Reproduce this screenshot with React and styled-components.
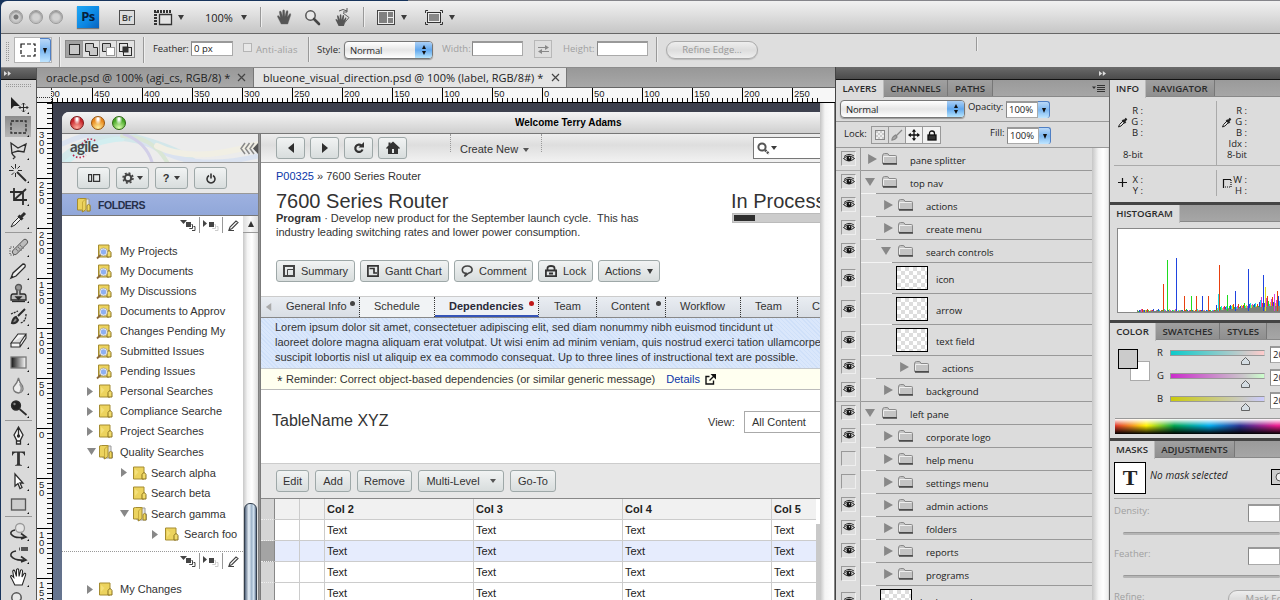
import React from "react";
import styled, { createGlobalStyle, css } from "styled-components";

const UI = `"Open Sans", "Noto Sans", sans-serif`;
const ARIAL = `"Liberation Sans", Arial, sans-serif`;

const GlobalStyle = createGlobalStyle`
  *, *::before, *::after { box-sizing: border-box; }
  body { margin: 0; width: 1280px; height: 600px; overflow: hidden; background: #dcdcdc; font-family: ${UI}; font-size: 9.5px; color: #1c1c1c; }
  svg { display: block; flex: none; overflow: visible; }
`;

/* ---------- shell ---------- */
const Shell = styled.div`
  width: 1280px; height: 600px; overflow: hidden; display: flex; flex-direction: column;
  background: linear-gradient(90deg, #17345c 0 408px, #85858a 408px);
  padding: 1px 0 0 1px;
`;
const Row = styled.div`display: flex; align-items: ${p => p.$align || "stretch"};`;
const AppBar = styled.header`
  height: 33px; flex: none; display: flex; align-items: center;
  background: linear-gradient(#f1f1f1, #dedede 45%, #c6c6c6);
  border-bottom: 1px solid #666; border-top-left-radius: 6px;
`;
const OptionsBar = styled.div`
  height: 34px; flex: none; display: flex; align-items: flex-start; padding-top: 3px;
  background: #dedede; border-bottom: 1px solid #8c8c8c; color: #2a2a2a;
`;
const Item = styled.div`
  flex: none; display: flex; align-items: center; margin-left: ${p => p.$gap || 0}px; width: ${p => p.$w}px;
  margin-top: ${p => p.$top || 0}px; white-space: nowrap; letter-spacing: ${p => p.$ls || 0}px;
  ${p => p.$dim && css`color: #a0a0a0;`}
`;
const Light = styled.i`
  width: 14px; height: 14px; border-radius: 50%; flex: none; margin-left: ${p => p.$gap}px;
  border: 1px solid #999; background: radial-gradient(circle at 50% 50%, ${p => p.$dot ? "#777 0 2px," : ""} #d2d2d2 3px, #c2c2c2 60%, #e6e6e6);
  box-shadow: inset 0 1px 2px #888;
`;
const PsLogo = styled.div`
  width: 22px; height: 22px; margin-left: 14px; background: linear-gradient(135deg, #1fa8f5, #0c86e2 60%, #0a62bc);
  color: #06203d; font: 700 13px/21px ${UI}; text-align: center; letter-spacing: -0.5px; box-shadow: 0 1px 1px #777;
`;
const BrLogo = styled.div`
  width: 16px; height: 15px; margin-left: 20px; border: 1px solid #4a4a4a; color: #3a3a3a; background: #ddd;
  font: 600 9.5px/13px ${UI}; text-align: center;
`;
const VLine = styled.i`
  flex: none; width: 1px; height: ${p => p.$h || 20}px; margin-left: ${p => p.$gap || 0}px; margin-top: ${p => p.$top || 0}px;
  background: #999; box-shadow: 1px 0 0 #eee;
`;
const Caret = styled.i`
  flex: none; display: inline-block; width: 0; height: 0; margin-left: ${p => p.$gap || 0}px;
  border: ${p => p.$s || 3.5}px solid transparent; border-bottom: 0;
  border-top: ${p => p.$hh || 5}px solid ${p => p.$c || "#3c3c3c"};
`;
const ZoomText = styled.span`font: 11px ${UI};`;

/* ---------- options bar ---------- */
const Grip = styled.i`
  flex: none; width: ${p => p.$w}px; height: ${p => p.$h}px; margin: ${p => p.$m};
  background: conic-gradient(#999 25%, transparent 0) 0 0 / 2px 2px;
`;
const Preset = styled.div`
  width: 38px; height: 26px; flex: none; margin-left: 5px; background: #fff; border: 1px solid #b3b3b3; display: flex;
  align-items: center; justify-content: space-between; padding-left: 5px;
`;
const BlueDrop = styled.span`
  width: ${p => p.$w || 11}px; align-self: stretch; display: flex; align-items: center; justify-content: center;
  background: linear-gradient(#b9d8f8, #7db7f0 50%, #bfe5ff); border: 1px solid #4f7fc4; border-width: 1px 1px 0 0; border-radius: 0 3px 3px 0;
`;
const ModeGroup = styled.div`display: flex; flex: none; margin: 3px 0 0 5px; border: 1px solid #888; height: 18px;`;
const ModeBtn = styled.span`
  width: 17px; display: flex; align-items: center; justify-content: center; border-right: 1px solid #999;
  background: ${p => p.$on ? "#a2a2a2" : "#e2e2e2"}; &:last-child { border-right: 0; }
`;
const Field = styled.div`
  flex: none; width: ${p => p.$w}px; height: ${p => p.$h || 15}px; margin-left: ${p => p.$gap || 0}px; margin-top: ${p => p.$top || 0}px;
  background: #fff; border: 1px solid #aaa; border-top: 2px solid #999; border-left-color: #888; line-height: ${p => (p.$h || 15) - 3}px; padding-left: 2px;
  white-space: nowrap; overflow: hidden; color: #1c1c1c;
`;
const Check = styled.i`width: 9px; height: 9px; flex: none; margin: 6px 0 0 10px; border: 1px solid #b5b5b5; background: #e8e8e8;`;
const Select = styled.div`
  flex: none; width: ${p => p.$w}px; height: 18px; margin-left: ${p => p.$gap || 0}px; margin-top: ${p => p.$top || 0}px;
  border: 1px solid #777; border-radius: 4px; background: linear-gradient(#fff, #e6e6e6 50%, #fff); display: flex; align-items: center;
  justify-content: space-between; padding-left: 5px; letter-spacing: -0.15px; box-shadow: 0 1px 1px #999; overflow: hidden;
`;
const Stepper = styled.span`
  width: 17px; height: 18px; display: flex; flex-direction: column; justify-content: center; align-items: center; gap: 2px;
  background: linear-gradient(#b4d4f6, #62a8ee 50%, #c0ecff);
  &::before, &::after { content: ""; border: 2.5px solid transparent; }
  &::before { border-top: 0; border-bottom: 4px solid #111; }
  &::after { border-bottom: 0; border-top: 4px solid #111; }
`;
const Swap = styled.div`width: 18px; height: 18px; margin: 3px 0 0 11px; border: 1px solid #b8b8b8; display: grid; place-items: center; flex: none;`;
const Pill = styled.div`
  width: ${p => p.$w}px; height: 18px; border-radius: 9px; border: 1px solid #aaa; color: #999; text-align: center; line-height: 15px;
  letter-spacing: 0; background: linear-gradient(#eee, #ddd 50%, #eee); flex: none; margin: ${p => p.$m || 0}; box-shadow: 0 1px 1px #bbb; white-space: nowrap;
`;

/* ---------- tools ---------- */
const Workspace = styled.div`flex: 1; min-height: 0; display: flex;`;
const Tools = styled.aside`width: 36px; flex: none; background: #dadada; border-right: 1px solid #555; overflow: hidden;`;
const DarkStrip = styled.div`
  height: ${p => p.$h || 12}px; flex: none; background: linear-gradient(#6a6a6a, #4b4b4b); border-bottom: 1px solid #111; display: flex; align-items: center;
  justify-content: ${p => p.$end ? "flex-end" : "flex-start"}; padding: ${p => p.$pad};
`;
const Tool = styled.div`
  height: 23px; width: 35px; display: grid; place-items: center; position: relative; padding-right: 1px;
  ${p => p.$on && css`background: linear-gradient(#8b8b8b, #b7b7b7) 4px 1px / 26px 21px no-repeat; `}
  &::after { content: ""; position: absolute; right: 7px; bottom: 1px; border: 1.5px solid #111; border-top-color: transparent; border-left-color: transparent; }
`;
const ToolRule = styled.div`height: ${p => p.$h}px; margin: 0 4px; border-bottom: 1px solid #999; transform: translateY(-2px);`;

/* ---------- document ---------- */
const Doc = styled.main`width: 798px; flex: none; display: flex; flex-direction: column; overflow: hidden;`;
const DocTabs = styled.div`height: 20px; flex: none; display: flex; background: linear-gradient(#989898, #a8a8a8); border-bottom: 1px solid #666;`;
const DocTab = styled.div`
  width: ${p => p.$w}px; padding-left: ${p => p.$pl}px; display: flex; align-items: center; justify-content: space-between; padding-right: ${p => p.$pr}px;
  background: ${p => p.$on ? "#e4e4e4" : "linear-gradient(#999, #a8a8a8)"}; border-right: 1px solid #777; font: 500 11px ${UI}; letter-spacing: ${p => p.$ls}px; white-space: nowrap; color: #222;
`;
const Rulers = styled.div`height: 15px; display: flex; flex: none; background: #f7f7f7; border-bottom: 1px solid #000;`;
const RulerCorner = styled.div`width: 15px; flex: none; background: linear-gradient(90deg, #333 50%, transparent 0) 0 9px / 2px 1px repeat-x #eee; border-right: 1px dotted #333;`;
const HStrip = styled.div`width: 768px; overflow: hidden; display: flex; & > :first-child { margin-left: -10px; }`;
const HCell = styled.div`
  width: 50px; height: 14px; flex: none; border-left: 1px solid #000; font: 9.5px/11px ${ARIAL}; padding-left: 1px; color: #222;
  background: repeating-linear-gradient(90deg, transparent 0 4px, #111 4px 5px) 0 100% / 49px 4px no-repeat;
`;
const VRuler = styled.div`width: 16px; flex: none; background: #f7f7f7; border-right: 1px solid #000; overflow: hidden; & > :first-child { margin-top: -25px; }`;
const VCell = styled.div`
  height: 50px; border-top: 1px solid #000; font: 9.5px/8px ${ARIAL}; padding: 2px 0 0 2px; color: #222; display: flex; flex-direction: column;
  background: repeating-linear-gradient(#0000 0 4px, #111 4px 5px) 100% 0 / 5px 49px no-repeat;
`;
const CanvasRow = styled.div`flex: 1; min-height: 0; display: flex;`;
const Canvas = styled.div`width: 767px; flex: none; padding: 9px 0 0 9px; background: linear-gradient(#3d404d, #454a5a 60px, #58637a 70%, #667590); display: flex; overflow: hidden;`;
const Gutter = styled.div`flex: 1; background: linear-gradient(90deg, #c4c4c4, #f4f4f4 35%, #fff); border-right: 1px solid #888;`;
const Win = styled.div`width: 758px; flex: none; background: #fff; border-top-left-radius: 7px; overflow: hidden; display: flex; flex-direction: column; font-family: ${ARIAL}; color: #333; font-size: 11px;`;
const WinTitle = styled.div`
  height: 22px; flex: none; background: linear-gradient(#f4f4f4, #cfcfcf); border-bottom: 1px solid #777; display: flex; align-items: center; padding-left: 8px;
  font: 700 10px ${ARIAL}; color: #000;
`;
const WinName = styled.span`margin: -1px 0 0 382px;`;
const Gem = styled.i`
  width: 14px; height: 14px; border-radius: 50%; margin-right: 7px; flex: none; border: 1px solid ${p => p.$d};
  background: radial-gradient(ellipse at 50% 18%, #fff 0 8%, transparent 40%), radial-gradient(circle at 50% 90%, ${p => p.$l}, ${p => p.$c} 65%);
`;
const WinBody = styled.div`flex: 1; min-height: 0; display: flex;`;
const Side = styled.div`width: 196px; flex: none; display: flex; flex-direction: column;`;
const Splitter = styled.div`width: 3px; flex: none; background: linear-gradient(90deg, #777, #999 60%, #666);`;
const Brand = styled.div`height: 29px; flex: none; background: #ececec; border-bottom: 1px solid #999; display: flex; justify-content: space-between; overflow: hidden; position: relative;`;
const Wave = styled.svg`position: absolute; left: 0; top: 0;`;
const BrandName = styled.span`position: relative; margin: 4px 0 0 8px; font: 700 15px/17px "Lato", sans-serif; letter-spacing: -0.6px; color: #484848;`;
const Collapse = styled.span`position: relative; margin-top: 8px; height: 13px;`;
const SideButtons = styled.div`height: 31px; flex: none; background: #e8e8e8; padding: 4px 0 0 15px; display: flex; gap: 6px; border-bottom: 1px solid #999;`;
const Btn = styled.div`
  height: 22px; width: ${p => p.$w}px; flex: none; border: 1px solid #9ea8a8; border-radius: 3px; background: linear-gradient(#f1f3f3, #d8dddd);
  display: flex; align-items: center; justify-content: ${p => p.$left ? "flex-start" : "center"}; gap: ${p => p.$gap || 5}px; padding-left: ${p => p.$left || 0}px; font: 11px ${ARIAL}; color: #333; white-space: nowrap;
`;
const FolderHead = styled.div`
  height: 22px; flex: none; background: linear-gradient(#9db1e0, #91a7d9); border-bottom: 1px solid #777; display: flex; align-items: center; padding-left: 14px; gap: 5px; font: 700 10.5px ${ARIAL}; color: #26304a; letter-spacing: -0.45px;
`;
const TreeWrap = styled.div`flex: 1; min-height: 0; display: flex;`;
const Tree = styled.div`width: 181px; flex: none; overflow: hidden;`;
const TreeTools = styled.div`
  height: ${p => p.$h}px; display: flex; justify-content: flex-end; align-items: flex-start; padding-top: 1px; border-top: ${p => p.$dots ? "1px dotted #999" : "0"};
`;
const TreeTool = styled.span`height: 16px; width: ${p => p.$w}px; display: grid; place-items: center; border-right: ${p => p.$last ? 0 : "1px solid #999"};`;
const TreeItem = styled.div`height: ${p => p.$h || 20}px; display: flex; align-items: center; padding-left: ${p => p.$pl}px; white-space: nowrap; font: 11px ${ARIAL}; color: #333;`;
const Tw = styled.span`width: ${p => p.$w || 12}px; flex: none; display: flex; align-items: center;`;
const TreeIcon = styled.span`width: ${p => p.$w || 21}px; flex: none;`;
const SideScroll = styled.div`
  flex: 1; background: linear-gradient(90deg, #c8c8c8, #f4f4f4 30%, #fff 60%, #ddd); display: flex; flex-direction: column; align-items: center;
`;
const UpBox = styled.div`width: 15px; height: 17px; flex: none; display: grid; place-items: center; border-bottom: 1px solid #999; background: linear-gradient(90deg, #ddd, #f8f8f8, #ddd);`;
const Thumb = styled.div`width: 13px; height: 120px; flex: none; margin-top: 270px; border-radius: 6px; border: 1px solid #34404e; background: linear-gradient(90deg, #56677e, #e9f2fa 35%, #9eb4ca 60%, #d5e5f3 80%, #5b6e88);`;
const Spacer = styled.div`height: ${p => p.$h}px;`;

const Main = styled.div`width: 559px; flex: none; display: flex; flex-direction: column; overflow: hidden;`;
const NavBar = styled.div`height: 29px; flex: none; display: flex; background: linear-gradient(#ededed, #dedede 40%, #f2f2f2); border-bottom: 1px solid #999; padding: 3px 0 0 15px;`;
const NavButtons = styled.div`display: flex; gap: 5px;`;
const CreateNew = styled.div`width: 92px; height: 18px; margin: -3px 0 0 43px; border: 1px dotted #999; border-width: 0 1px; display: flex; gap: 5px; padding: 9px 0 0 9px; white-space: nowrap; font-size: 11px; line-height: 13px; & i { margin-top: 5px; }`;
const SearchBox = styled.div`margin-left: 211px; flex: 1; height: 22px; border: 1px solid #777; border-right: 0; background: #fff; display: flex; align-items: center; padding-left: 3px;`;
const Header = styled.div`height: 133px; flex: none; display: flex; padding: 6px 0 0 15px; `;
const HeadText = styled.div`width: 455px; flex: none;`;
const Crumb = styled.div`font-size: 11px; line-height: 14px; & a { color: #0a36a8; }`;
const Title = styled.div`font-size: 20px; line-height: 24px; margin-top: ${p => p.$mt || 6}px; color: #333; white-space: nowrap;`;
const Desc = styled.div`font-size: 11px; line-height: 14px; white-space: pre; margin-top: -2px; letter-spacing: -0.015px;`;
const Actions = styled.div`display: flex; gap: 5px; margin-top: 21px;`;
const Progress = styled.div`width: 120px; height: 10px; border: 1px solid #bbb; background: #ccc; margin-left: 1px; padding: 1px; & > i { display: block; width: 21px; height: 6px; background: #2e2e2e; }`;
const TabRow = styled.div`height: 22px; flex: none; display: flex; background: linear-gradient(#e9edf2, #d9dee5); border-top: 1px solid #ccc; border-bottom: 1px solid #888; white-space: nowrap; font-size: 11px;`;
const Tab = styled.div`
  width: ${p => p.$w}px; flex: none; border-right: 1px dotted #333; padding-left: ${p => p.$pl}px; line-height: 19px; display: flex;
  ${p => p.$light && css`background: #f1f3f5;`}
  ${p => p.$on && css`font-weight: 700; background: #eef1f5; border-bottom: 2px solid #3554b8; color: #2a2a38;`}
`;
const Dot = styled.i`width: 5px; height: 5px; border-radius: 50%; background: ${p => p.$c}; margin: 4px 0 0 ${p => p.$gap || 4}px;`;
const Notice = styled.div`
  height: 51px; flex: none; padding: 2px 0 0 14px; font-size: 11px; line-height: 15px; white-space: pre;
  background: repeating-linear-gradient(45deg, #cfe0f9 0 1px, #dae7fb 1px 3px); border-bottom: 1px solid #c5c9cd;
`;
const Reminder = styled.div`height: 21px; flex: none; background: #fffff0; border-bottom: 1px solid #bbb; padding-left: 16px; display: flex; align-items: center; white-space: nowrap; & > i { font: 14px/10px ${ARIAL}; width: 9px; padding-top: 3px; } & a { color: #0a36a8; margin: 0 5px 0 11px; }`;
const TableHead = styled.div`height: 73px; flex: none; display: flex; padding-left: 11px; & > b { font-weight: 400; font-size: 16px; width: 436px; line-height: 62px; } & > span { width: 36px; line-height: 65px; }`;
const ViewSelect = styled.div`margin-top: 21px; height: 22px; flex: 1; border: 1px solid #aaa; border-right: 0; line-height: 20px; padding-left: 7px;`;
const TableBar = styled.div`height: 36px; flex: none; background: #e7e7e7; border-top: 1px solid #ccc; border-bottom: 1px solid #888; display: flex; gap: 6px; padding: 6px 0 0 15px;`;
const Grid = styled.div`display: flex; flex: 1; min-height: 0;`;
const GridRows = styled.div`width: 555px; flex: none;`;
const GridRow = styled.div`
  height: 21px; display: grid; grid-template-columns: 14px 25px 25px 149px 149px 149px 1fr; line-height: 20px; font-size: 11px; color: #222;
  background: ${p => p.$bg || "#fff"}; font-weight: ${p => p.$head ? 700 : 400};
  & > span { border-right: 1px solid #ccc; border-bottom: 1px solid #ccc; padding-left: 2px; }
  & > span:first-child { background: ${p => p.$sel ? "#a4a4a4" : "#d5d5d5"}; border-right: 1px solid #888; border-bottom: 1px dotted #eee; }
  & > span:last-child { border-right: 0; }
`;
const GridScroll = styled.div`width: 4px; background: #c9c9c9; margin-top: ${p => p.$t}px;`;

/* ---------- panels ---------- */
const Docks = styled.div`flex: 1; min-width: 0; display: flex; flex-direction: column; border-left: 1px solid #444; margin-top: -1px;`;
const DockRow = styled.div`display: flex; flex: 1; min-height: 0;`;
const Layers = styled.section`width: 274px; flex: none; background: #dcdcdc; border-right: 1px solid #666; display: flex; flex-direction: column; overflow: hidden;`;
const SideDock = styled.section`flex: 1; background: #dcdcdc; min-width: 0; overflow: hidden;`;
const PanelTabs = styled.div`height: 17px; flex: none; display: flex; background: linear-gradient(#9a9a9a, #a6a6a6); border-bottom: 1px solid #888;`;
const PanelTab = styled.div`
  width: ${p => p.$w}px; flex: none; text-align: center; font: 600 9.6px/17px ${UI}; border-right: 1px solid #777; color: #2a2a2a; white-space: nowrap;
  ${p => p.$on ? css`background: #dcdcdc; height: 18px; border-right-color: #bbb;` : css`background: linear-gradient(#a0a0a0, #8f8f8f);`}
`;
const PanelMenu = styled.div`margin-left: auto; padding: 5px 4px 0 0;`;
const Line = styled.div`display: flex; align-items: flex-start; height: ${p => p.$h}px; flex: none; padding: ${p => p.$p || 0}; border-bottom: 1px solid #999; white-space: nowrap;`;
const LockGroup = styled.div`display: flex; border: 1px solid #999; height: 18px; & > span { width: 17px; display: grid; place-items: center; border-right: 1px solid #999; } & > span:last-child { border: 0; } & > span:nth-child(n+3) { background: #f2f2f2; }`;
const LayerArea = styled.div`flex: 1; display: flex; min-height: 0;`;
const LayerList = styled.div`width: 256px; flex: none;`;
const LayerRow = styled.div`height: ${p => p.$h}px; display: flex; background: linear-gradient(#f4f4f4, #f4f4f4) 24px 100% / ${p => p.$line}px 1px no-repeat;`;
const EyeCell = styled.div`width: 25px; flex: none; border-right: 1px solid #999; padding: ${p => p.$tall ? 6 : 3}px 0 0 5px; ${p => p.$rule && css`border-bottom: 1px solid #aaa;`}`;
const EyeBox = styled.div`width: 15px; height: ${p => p.$tall ? 18 : 15}px; border: 1px solid #999; border-right-color: #eee; border-bottom-color: #eee; display: grid; place-items: center;`;
const LayerBody = styled.div`flex: 1; margin-left: ${p => p.$l}px; border-bottom: 1px solid #999; display: flex; align-items: center; letter-spacing: -0.02px; color: #1a1a1a; white-space: nowrap;`;
const LayerName = styled.span`padding-top: 2px;`;
const Disclosure = styled.span`width: 16px; flex: none; display: flex;`;
const FolderSlot = styled.span`width: 27px; flex: none;`;
const Thumbnail = styled.span`
  width: 32px; height: 24px; flex: none; border: 1px solid #000; margin-right: 8px;
  background: conic-gradient(#fff 25%, #ddd 0 50%, #fff 0 75%, #ddd 0) 0 0 / 8px 8px;
`;
const LayerScroll = styled.div`width: 16px; background: linear-gradient(90deg, #c6c6c6, #f3f3f3 40%, #fff 70%, #eee);`;
const BlueTall = styled.span`display: flex; height: 17px; margin-top: 1px;`;
const Indent = styled.span`flex: none; width: ${p => p.$w > 0 ? p.$w : 0}px; margin-left: ${p => p.$w < 0 ? p.$w : 0}px;`;

const PanelGap = styled.div`height: 3px; background: #444;`;
const Info = styled.div`height: 105px; padding-left: 4px; line-height: 11px;`;
const InfoRow = styled.div`display: flex; height: ${p => p.$h}px; padding-top: 4px; border-bottom: ${p => p.$b ? "1px solid #aaa" : 0};`;
const InfoCell = styled.div`width: 102px; flex: none; display: flex; padding-left: 4px; & + & { border-left: 1px solid #aaa; padding-left: 5px; }`;
const InfoIcon = styled.span`width: 6px; flex: none; padding-top: ${p => p.$pt || 11}px;`;
const InfoLabels = styled.span`width: 19px; white-space: pre; display: flex; flex-direction: column; align-items: flex-end; padding-top: 4px; line-height: 11px;`;
const HistWrap = styled.div`height: 98px; padding-top: 1px;`;
const HistBox = styled.div`margin: 5px 0 0 7px; height: 85px; background: #fff; border: 1px solid #888; border-right: 0;`;
const ColorBody = styled.div`height: 98px; display: flex; flex-direction: column; justify-content: space-between;`;
const Swatches = styled.div`width: 32px; height: 32px; margin: 9px 0 0 8px; flex: none; display: grid; & > i { grid-area: 1 / 1; width: 20px; height: 20px; } & > i:first-child { align-self: end; justify-self: end; background: #fff; border: 1px solid #aaa; } & > i:last-child { background: #cbcbcb; border: 1px solid #000; }`;
const Sliders = styled.div`margin-left: 7px; padding-top: 6px;`;
const SliderRow = styled.div`height: 23px; display: flex; & > b { font-weight: 400; width: 13px; line-height: 13px; }`;
const Track = styled.div`width: 95px; height: 6px; margin: 4px 5px 0 0; border: 1px solid #999; border-right-color: #ccc; background: linear-gradient(90deg, ${p => p.$a}, #cbcbcb 80%, ${p => p.$b});`;
const KnobRow = styled.div`padding-left: 71px; margin-top: 1px;`;
const Spectrum = styled.div`height: 16px; margin: 0 0 4px 5px; border-top: 1px solid #999;
  background: linear-gradient(#fff, transparent 45%, #0003 55%, #000), linear-gradient(90deg, #e0352a, #f3901f 10%, #fff200 19%, #00a550 36%, #00aeef 57%, #2e3192 76%, #ec1c8f 98%);`;
const MaskHead = styled.div`height: 41px; margin: 0 0 0 4px; padding-top: 4px; display: flex; border-bottom: 1px solid #aaa; font: italic 10px ${UI}; letter-spacing: 0.05px; white-space: nowrap;`;
const MaskT = styled.div`width: 32px; height: 32px; flex: none; border: 1px solid #000; background: #fff; font: 700 22px/29px "Liberation Serif", serif; text-align: center; letter-spacing: 0; color: #222;`;
const MaskNote = styled.span`width: 125px; flex: none; padding: 5px 0 0 4px; line-height: 16px;`;
const MaskBtn = styled.span`width: 20px; height: 16px; flex: none; margin-top: 7px; border: 1px solid #000; background: #ccc; padding: 2px 0 0 3px;`;
const MaskLine = styled.div`display: flex; height: 43px; padding: 5px 0 0 4px; color: #a0a0a0; line-height: 14px; position: relative; justify-content: space-between;
  &::after { content: ""; position: absolute; left: 13px; right: 0; bottom: 7px; height: 3px; background: #b5b5b5; border-top: 1px solid #999; border-radius: 2px; display: ${p => p.$bare ? "none" : "block"}; }`;

/* ---------- drawings ---------- */
const Svg = ({ w = 20, h = 20, vb, children, sw = 1.3, c = "#2c2c2c", fill = "none" }) => (
  <svg width={w} height={h} viewBox={vb || `0 0 ${w} ${h}`} stroke={c} fill={fill} strokeWidth={sw}>{children}</svg>
);
const HandPath = "M6 17 L3 11 Q1 8 3 8 L5 10 L4 4 Q5 2 6 4 L7.5 9 L7.6 2.5 Q9 1 9.6 2.5 L10 9 L11.5 3 Q13 2 13.3 4 L12.7 9.5 L15 6 Q16.5 5.5 16.2 7.5 L13 17 Z";
const Hand = ({ solid, s = 16 }) => <svg width={s} height={s} viewBox="1 1 16 17"><path d={HandPath} fill={solid ? "#555" : "#fff"} stroke={solid ? "#666" : "#222"} strokeWidth={solid ? .4 : 1} /></svg>;
const Magnifier = ({ s = 17 }) => <svg width={s} height={s} viewBox="0 0 17 17"><circle cx="6.500" cy="6.500" r="4.700" fill="#e8e8e8" stroke="#555" strokeWidth="1.500" /><path d="M10 10L15 15" stroke="#444" strokeWidth="2.600" strokeLinecap="round" /></svg>;
const RotateView = () => <svg width="20" height="19" viewBox="0 0 20 19"><g transform="translate(1 5) scale(.76)"><path d={HandPath} fill="#555" /></g><path d="M6 3 Q10 0 14 3 M14 0v4h-4" stroke="#555" fill="none" /><path d="M10 5l6 4.500-5 6" stroke="#666" fill="none" /></svg>;
const Rulr = () => <Svg w={18} h={15} c="#333"><path d="M1.500 15V1.500H18" strokeWidth="3" strokeDasharray="2 1" /><path d="M5.500 4.500H17.500V14.500H5.500Z" fill="#e4e4e4" /></Svg>;
const Arrange = () => <Svg w={18} h={15} c="#444"><rect x=".5" y=".5" width="17" height="14" fill="#eee" strokeWidth="1" /><path d="M2 2h8v11H2zM11 2h5v5h-5zM11 8h5v5h-5z" fill="#808080" stroke="none" /></Svg>;
const Screen = () => <Svg w={18} h={15} c="#333" sw={1}><path d="M.5 3V.500H3M15 .500h2.500V3M17.500 12v2.500H15M3 14.500H.500V12" /><rect x="2.500" y="2.500" width="13" height="10" fill="#eee" /><rect x="4" y="4" width="10" height="7" fill="#888" stroke="none" /></Svg>;
const DblArrow = () => <svg width="7" height="5" viewBox="0 0 7 5"><path d="M0 0L3.200 2.500 0 5zM3.800 0L7 2.500 3.800 5z" fill="#ddd" /></svg>;
const Tri = ({ dir, c = "#888", s = 9 }) => <svg width={s} height={s} viewBox="0 0 9 9"><path d={dir === "down" ? "M0 1h9L4.500 8z" : dir === "left" ? "M7 0v9L1 4.500z" : "M1 0l8 4.500L1 9z"} fill={c} /></svg>;
const NavArrow = ({ back }) => <svg width="6" height="10" viewBox="0 0 6 10"><path d={back ? "M6 0v10L0 5z" : "M0 0v10l6-5z"} fill="#2e2e2e" /></svg>;
const SmallTri = () => <svg width="6" height="9" viewBox="0 0 6 9"><path d="M0 0l6 4.500L0 9z" fill="#888" /></svg>;
const Cross = () => <Svg w={7} h={7} c="#444" sw={1.200}><path d="M0 0l7 7M7 0L0 7" /></Svg>;

const toolIcons = [
  <path key="a" d="M3 3v12l3-3h6z" fill="#222" stroke="none" />,
  <rect key="a" x="3" y="4" width="15" height="12" strokeDasharray="3 1.500" />,
  <path key="a" d="M4 14L3 3l7 5 8-4-2 8-6-1-4 1q-3 1-1 3l2 2-2 2" />,
  <g key="a"><path d="M9 9l9 9" strokeWidth="2" /><path d="M7.500 1v4.500M7.500 10v4M1 7.500h4.500M10 7.500h4M3 3l3 3M12 3L9.500 5.500M3.500 12l2.500-2.500" strokeWidth="1" /></g>,
  <path key="a" d="M6 2v12h13M2 6h13v13M6 14L18 3" strokeWidth="1.800" />,
  <g key="a"><path d="M3 18l2-4 7-7 2 2-7 7z" fill="#eee" strokeWidth="1" /><path d="M10.500 6.500l4 4M13 8l4-4" strokeWidth="3" /></g>,
  <g key="a"><path d="M6 18h-4v-8h5" strokeDasharray="1 1.500" strokeWidth="1" /><path d="M7 15L17 5" stroke="#555" strokeWidth="6" strokeLinecap="round" /><path d="M7 15L17 5" stroke="#bbb" strokeWidth="4.400" strokeLinecap="round" /><path d="M10 10l4 4M12 8l4 4M8 12l3 3" stroke="#666" strokeDasharray="1 1" /></g>,
  <path key="a" d="M3 18l2-5L15 4q3 0 2 3L8 16zM3 18l2-1-1-1z" fill="#eee" />,
  <g key="a"><circle cx="10.500" cy="4.500" r="3" fill="#999" stroke="#555" /><path d="M9 7.500v3.500H5q-2 0-2 3v3h15v-3q0-3-2-3h-4V7.500" fill="#bbb" /><path d="M4 18.500h13" /><path d="M8 14h5l-2.500 2.500z" fill="#222" /></g>,
  <g key="a"><path d="M10 10l7-7M4 17q4 1 6-3l-2-3q-3 1-4 6z" fill="#888" strokeWidth="2" /><path d="M3 8l7-3M18 8q0 8-6 9" strokeDasharray="2 1" /></g>,
  <path key="a" d="M3 14l7-9h8l-6 9zM3 14v4h9l6-9V5M12 14v4" fill="#f4f4f4" strokeWidth="1.100" />,
  <g key="a"><defs><linearGradient id="tg"><stop stopColor="#111" /><stop offset="1" stopColor="#fff" /></linearGradient></defs><rect x="3" y="5" width="15" height="11" fill="url(#tg)" stroke="#777" /></g>,
  <g key="a"><path d="M10.500 3q1 5 4 8 2 6-4 7-6-1-5-6 4-4 5-9z" fill="#eee" stroke="#777" /><path d="M12 9q3 5 0 8" stroke="#999" strokeWidth="2" /></g>,
  <g key="a"><circle cx="8" cy="7.500" r="4.500" fill="#222" /><path d="M11.500 11l7 6" strokeWidth="1.800" /><circle cx="6.500" cy="6" r="1.200" fill="#888" stroke="none" /></g>,
  <g key="a"><path d="M10.500 2L6 10l3 6h3l3-6zM10.500 3v8M8.500 16h4v3h-4z" fill="#f4f4f4" /><circle cx="10.500" cy="11" r="1" fill="#222" /></g>,
  <path key="a" d="M4 3.500h13V7.500h-.8q-.5-2.800-3-2.800h-1.300V15.500q0 1.500 2 1.500v.8h-6.800v-.8q2 0 2-1.500V4.700H7.800q-2.500 0-3 2.800H4z" fill="#333" stroke="none" />,
  <path key="a" d="M7 3v12l3-2.500 2 5 2-1-2-4.500h3z" fill="#fff" />,
  <rect key="a" x="3.500" y="5" width="14" height="11" fill="#ccc" stroke="#555" />,
  <g key="a"><path d="M7 9q-5 1-4 4 4 5 13 3M13 12.500l5 3.500-5 2" strokeWidth="1.600" /><circle cx="12" cy="7" r="4.500" fill="#e4e4e4" stroke="#999" /></g>,
  <g key="a"><path d="M8 7q-6 1-5 5 4 5 13 4M13 12.500l5 3.500-5 2" strokeWidth="1.600" /><path d="M13 3h7v4h-7zM11 3.500h1v3h-1z" fill="#555" stroke="none" /></g>,
];
const ToolIcon = ({ i }) => <Svg w={21} h={20} vb="0 0 21 20">{toolIcons[i]}{i === 0 && <path d="M15.500 9v9M11 13.500h9M14 10.500l1.500-1.500 1.500 1.500M14 16.500l1.500 1.500 1.500-1.500M12.500 12L11 13.500l1.500 1.500M18.500 12l1.500 1.500-1.500 1.500" strokeWidth="1" />}</Svg>;

const YFolder = ({ kind }) => (
  <svg width="17" height="16" viewBox="0 0 17 16">
    {kind === "open" ? <g strokeWidth="1"><path d="M5 2h8v5l1.500 1v6H5z" fill="#e6e6e6" stroke="#999" /><path d="M11 14V8.500q1.500-2 3 0V14z" fill="#f0d860" stroke="#9c8227" /><path d="M1.500 2l2-.500h6.500v11l-3.500 2.500v-2h-5z" fill="#ecd35e" stroke="#a58c30" /><path d="M6.500 13V5l3.500-3.500" fill="none" stroke="#c8ab3c" /></g>
      : <g strokeWidth="1"><path d="M1.500 2h10.500v12H1.500z" fill="#ecd35e" stroke="#a58c30" /><path d="M10 14V9.500l1.500-1.800h1l1.500 1.800v4.500z" fill="#f2dc6c" stroke="#8a7220" /><path d="M3 4l3.500 3L3 11z" fill="#f4e07a" /></g>}
    {kind === "search" && <g><circle cx="6.500" cy="9" r="3.300" fill="#8fb0f2" stroke="#f4f4f4" strokeWidth="1.200" /><circle cx="6.500" cy="9" r="4" fill="none" stroke="#888" strokeWidth=".6" /><path d="M3.500 12L0 15.500" stroke="#8c6a3c" strokeWidth="1.800" /></g>}
  </svg>
);
const GFolder = () => <svg width="16" height="12" viewBox="0 0 16 12"><path d="M.5 10.500V3Q.5 .500 2.500 .500H5Q6.500 .500 7 2.500H13.500Q14.500 2.500 14.500 3.500V10.500Z" fill="#c4c4c4" stroke="#8a8a8a" /><path d="M1 11h14" stroke="#222" strokeWidth="1.200" /><path d="M1.500 9V3.500H13.500" stroke="#eee" fill="none" /></svg>;
const Eye = () => <svg width="12" height="9" viewBox="0 0 12 9"><path d="M.5 4.500Q6-.5 11.500 4.500 6 9.500.5 4.500z" fill="#ddd" stroke="#222" strokeWidth="1" /><circle cx="6" cy="4.400" r="2.500" fill="#111" /><circle cx="6.500" cy="3.700" r=".7" fill="#eee" /><path d="M1 2.500Q6-1.500 11 2" stroke="#333" fill="none" /></svg>;
const Gear = () => <svg width="12" height="12" viewBox="0 0 12 12"><circle cx="6" cy="6" r="3.300" fill="none" stroke="#444" strokeWidth="2.200" /><circle cx="6" cy="6" r="5" fill="none" stroke="#444" strokeWidth="1.500" strokeDasharray="2 1.920" /></svg>;
const Power = () => <Svg w={10} h={11} c="#333" sw={1.600}><path d="M3 2.500a4 4 0 1 0 4 0M5 .500v5" /></Svg>;
const Reload = () => <Svg w={12} h={12} c="#333" sw={2.200}><path d="M8.500 3.500A3.700 3.700 0 1 0 9.500 7.500" /><path d="M5.500 5.500h5.500V0z" fill="#333" stroke="none" /></Svg>;
const Home = () => <svg width="14" height="14" viewBox="0 0 14 14"><path fillRule="evenodd" d="M7 .500l7 6.500-1 1-1-.8V13H2V7.200L1 8 0 7 2.500 4.600V1.500h2v1.300zM6 8v4h2V8z" fill="#333" /></svg>;
const Multi = ({ right }) => <svg width="17" height="11" viewBox="0 0 17 11"><path d={right ? "M0 0l4 3.500-4 3.500z" : "M0 0h7L3.500 4z"} fill="#444" /><rect x="6.500" y="2.500" width="4" height="4" fill="#444" stroke="#444" /><path d="M9.500 8v.5h3v-4h-1M12 10.500h3v-4h-1.500" stroke={right ? "#ccc" : "#444"} fill="none" /></svg>;
const Pencil = () => <Svg w={11} h={11} c="#444" sw={1.100}><path d="M1 10l1-3 6-6 2 1.500-6 6zM1 10.500h5" /></Svg>;
const Popout = () => <Svg w={11} h={11} c="#111" sw={1.400}><path d="M4.500 2.500H1v7.500h7.500V6.500M4.500 6.500L9 2" /><path d="M5.500 0H11v5.500z" fill="#111" stroke="none" /></Svg>;
const Dropper = () => <Svg w={10} h={11} c="#222" sw={1}><path d="M.5 10l1-2.500 4-4 1.500 1.500-4 4z" fill="#ddd" /><path d="M4.500 3l3 3M6.500 4l2-2.500" strokeWidth="2.200" /></Svg>;

/* ---------- data ---------- */
const hTicks = ["500", "450", "400", "350", "300", "250", "200", "150", "100", "50", "0", "50", "100", "150", "200", "250"];
const vTicks = ["", "300", "250", "200", "150", "100", "50", "0", "50", "100", "150"];
const searches = ["My Projects", "My Documents", "My Discussions", "Documents to Approv", "Changes Pending My", "Submitted Issues", "Pending Issues"];
const layers = [
  ["pane splitter", 0, "f", 0, 23], ["top nav", 0, "o", 1, 23], ["actions", 1, "f", 1, 23], ["create menu", 1, "f", 1, 23], ["search controls", 1, "o", 2, 23],
  ["icon", 2, "t", 2, 31], ["arrow", 2, "t", 2, 31], ["text field", 2, "t", 2, 31], ["actions", 2, "f", 1, 23], ["background", 1, "f", 0, 23],
  ["left pane", 0, "o", 1, 23], ["corporate logo", 1, "f", 1, 23], ["help menu", 1, "f", 1, 23, true], ["settings menu", 1, "f", 1, 23, true],
  ["admin actions", 1, "f", 1, 23], ["folders", 1, "f", 1, 23], ["reports", 1, "f", 1, 23], ["programs", 1, "f", 1, 23], ["background", 1, "t", 1, 31],
];
const spikes = [[45, 27, "#e8400e"], [49, 51, "#1fdc1f"], [58, 53, "#1f44e0"], [66, 15, "#e8400e"], [73, 15, "#1fdc1f"], [78, 15, "#e8400e"], [84, 15, "#1f44e0"], [90, 15, "#e8400e"], [100, 17, "#1fdce0"], [101, 46, "#e8400e"], [109, 16, "#1fdc1f"], [117, 20, "#1f44e0"], [130, 42, "#1f44e0"], [145, 36, "#1f44e0"], [147, 24, "#e0e01f"], [156, 17, "#e040e0"], [159, 20, "#e8400e"]];
const hues = ["#e8400e", "#1fdc1f", "#1f44e0", "#1fdce0", "#e0e01f", "#d040d8"];

const Histogram = () => (
  <svg width="162" height="83" viewBox="0 0 162 83" shapeRendering="crispEdges">
    {Array.from({ length: 143 }, (_, i) => {
      const x = i + 19, n = ((i * 37) % 17 + (i * 13) % 11) / 26;
      const base = x < 30 ? (i % 3 ? 0 : 2) : x < 98 ? 1.500 : 2 + (x - 98) * 0.07;
      const h = x < 98 ? 1 + n * 2 : base + n * (x > 140 ? 12 : 6);
      return <g key={i}><rect x={x} y={83 - h} width="1" height={h} fill={hues[(i * 7 + (i >> 2)) % 6]} /><rect x={x} y={83 - base} width="1" height={base} fill="#7c8078" /></g>;
    })}
    {spikes.map(([x, h, c]) => <rect key={x} x={x} y={82 - h} width="1" height={h} fill={c} />)}
  </svg>
);

/* ---------- sections ---------- */
const AppBarContent = () => (
  <AppBar>
    <Light $gap={8} $dot /><Light $gap={6} /><Light $gap={6} />
    <PsLogo>Ps</PsLogo><BrLogo>Br</BrLogo>
    <Item $gap={19} $w={18}><Rulr /></Item><Caret $gap={6} />
    <Item $gap={21} $w={28}><ZoomText>100%</ZoomText></Item><Caret $gap={7.5} />
    <VLine $gap={13.5} />
    <Item $gap={15} $w={16}><Hand solid /></Item>
    <Item $gap={12} $w={17}><Magnifier /></Item>
    <Item $gap={12} $w={20}><RotateView /></Item>
    <VLine $gap={10} />
    <Item $gap={13} $w={18}><Arrange /></Item><Caret $gap={6} />
    <Item $gap={18} $w={18}><Screen /></Item><Caret $gap={6} />
  </AppBar>
);

const Options = () => (
  <OptionsBar>
    <Grip $w={4} $h={20} $m="5px 0 0 4px" />
    <Preset><Svg w={17} h={15} c="#111" sw={1.200}><rect x="1" y="1" width="14" height="12" strokeDasharray="4 2" /></Svg><BlueDrop><Caret $s={2.5} $hh={6} $c="#111" /></BlueDrop></Preset>
    <VLine $gap={7} $h={30} />
    <ModeGroup>
      <ModeBtn $on><Svg w={11} h={11} sw={1}><rect x=".5" y=".5" width="10" height="10" fill="#c8c8c8" /></Svg></ModeBtn>
      <ModeBtn><Svg w={13} h={13} sw={1}><path d="M.5 .500h8v4h4v8h-8v-4h-4z" fill="#c8c8c8" /></Svg></ModeBtn>
      <ModeBtn><Svg w={13} h={13} sw={1}><path d="M.5 .500h8v4h-4v4h-4z" fill="#c8c8c8" /><rect x="4.500" y="4.500" width="8" height="8" stroke="#999" fill="#fff" /></Svg></ModeBtn>
      <ModeBtn><Svg w={13} h={13} sw={1}><rect x=".5" y=".5" width="8" height="8" /><rect x="4.500" y="4.500" width="8" height="8" /><rect x="4" y="4" width="5" height="5" fill="#333" /></Svg></ModeBtn>
    </ModeGroup>
    <VLine $gap={8} $h={26} />
    <Item $gap={9} $w={38} $top={5} $ls={-0.1}>Feather:</Item><Field $w={42} $top={4}>0 px</Field>
    <Check /><Item $gap={4} $w={46} $top={6} $ls={0.1} $dim>Anti-alias</Item>
    <VLine $gap={6} $h={25} $top={0} />
    <Item $gap={8} $w={27} $top={6}>Style:</Item><Select $w={89} $top={4}>Normal<Stepper /></Select>
    <Item $gap={9} $w={30} $top={5} $dim>Width:</Item><Field $w={51} $top={4} />
    <Swap><Svg w={11} h={9} c="#888" sw={1}><path d="M0 2.500h8M3 6.500h8" /><path d="M7 0l4 2.500L7 5zM4 4L0 6.500 4 9z" fill="#888" stroke="none" /></Svg></Swap>
    <Item $gap={11} $w={34} $top={5} $dim>Height:</Item><Field $w={51} $top={4} />
    <VLine $gap={8} $h={25} />
    <Pill $w={92} $m="4px 0 0 9px">Refine Edge...</Pill>
    <VLine $gap={218} $h={14} />
  </OptionsBar>
);

const ToolColumn = () => (
  <Tools>
    <DarkStrip $pad="0 0 0 3px"><DblArrow /></DarkStrip>
    <Row><Grip $w={27} $h={4} $m="4px 4px 4px" /></Row>
    {toolIcons.map((_, i) => (
      <React.Fragment key={i}>
        {i === 6 && <ToolRule $h={5} />}{(i === 14 || i === 18) && <ToolRule $h={4} />}
        <Tool $on={i === 1}><ToolIcon i={i} /></Tool>
      </React.Fragment>
    ))}
    <Tool><Hand s={18} /></Tool><Tool><Magnifier /></Tool>
  </Tools>
);

const TreeToolbar = ({ h, dots }) => (
  <TreeTools $h={h} $dots={dots}><TreeTool $w={22}><Multi /></TreeTool><TreeTool $w={23}><Multi right /></TreeTool><TreeTool $w={20} $last><Pencil /></TreeTool></TreeTools>
);

const SidePane = () => (
  <Side>
    <Brand>
      <Wave width="196" height="28" viewBox="0 0 196 28"><g fill="none" strokeLinecap="round">
        <path d="M0 26Q35-6 75 5T130 28" stroke="#d3e7ea" strokeWidth="9" /><path d="M0 10Q50-14 90 12T196 22" stroke="#dae2f0" strokeWidth="5" />
        <path d="M5 28Q30 6 60 5" stroke="#d2eef0" strokeWidth="5" /><path d="M60 2Q90 2 105 28" stroke="#d9e6d5" strokeWidth="4" /><path d="M95 12Q130 30 196 10" stroke="#f1efe4" strokeWidth="6" /><path d="M62 0Q84 8 90 28" stroke="#d2cfe8" strokeWidth="3" />
      </g><path d="M20 10Q26 1 35 8" stroke="#bb2850" strokeWidth="1.700" strokeDasharray="1.500 2" fill="none" /><path d="M11 21q6 5 13 0" stroke="#bb2850" strokeWidth="1.700" strokeDasharray="1.500 2" fill="none" /></Wave>
      <BrandName>agile</BrandName>
      <Collapse><Svg w={18} h={13} c="#8a8a8a" sw={1.500}><path d="M5 1L1 6.500 5 12M9.500 1L5.500 6.500l4 5.500M14 1l-4 5.500 4 5.500" /><path d="M18 1v11l-5-5.500z" fill="#555" stroke="none" /></Svg></Collapse>
    </Brand>
    <SideButtons>
      <Btn $w={33}><Svg w={12} h={8} c="#333" sw={1.200}><path d="M.6.600h3v6.800h-3zM5.600.600h6v6.800h-6z" /></Svg></Btn>
      <Btn $w={33} $gap={3}><Gear /><Caret $hh={4} /></Btn>
      <Btn $w={33}><b>?</b><Caret $hh={4} /></Btn>
      <Btn $w={33}><Power /></Btn>
    </SideButtons>
    <FolderHead><YFolder kind="open" />FOLDERS</FolderHead>
    <TreeWrap>
      <Tree>
        <TreeToolbar h={25} />
        {searches.map(s => <TreeItem key={s} $pl={35}><TreeIcon $w={23}><YFolder kind="search" /></TreeIcon>{s}</TreeItem>)}
        {["Personal Searches", "Compliance Searche", "Project Searches"].map(s => <TreeItem key={s} $pl={25}><Tw $w={11}><SmallTri /></Tw><TreeIcon $w={22}><YFolder /></TreeIcon>{s}</TreeItem>)}
        <TreeItem $pl={25} $h={21}><Tw $w={11}><Tri dir="down" /></Tw><TreeIcon $w={22}><YFolder kind="open" /></TreeIcon>Quality Searches</TreeItem>
        <TreeItem $pl={59} $h={21}><Tw $w={11}><SmallTri /></Tw><TreeIcon $w={19}><YFolder /></TreeIcon>Search alpha</TreeItem>
        <TreeItem $pl={59}><Tw $w={11} /><TreeIcon $w={19}><YFolder /></TreeIcon>Search beta</TreeItem>
        <TreeItem $pl={58} $h={21}><Tw><Tri dir="down" /></Tw><TreeIcon $w={19}><YFolder kind="open" /></TreeIcon>Search gamma</TreeItem>
        <TreeItem $pl={90} $h={20}><Tw $w={12}><SmallTri /></Tw><TreeIcon $w={20}><YFolder /></TreeIcon>Search foo</TreeItem>
        <Spacer $h={7} />
        <TreeToolbar h={28} dots />
        <TreeItem $pl={25}><Tw $w={11}><SmallTri /></Tw><TreeIcon $w={22}><YFolder /></TreeIcon>My Changes</TreeItem>
      </Tree>
      <SideScroll><UpBox><svg width="6" height="6" viewBox="0 0 6 6"><path d="M3 0l3 6H0z" fill="#333" /></svg></UpBox><Thumb /></SideScroll>
    </TreeWrap>
  </Side>
);

const MainPane = () => (
  <Main>
    <NavBar>
      <NavButtons><Btn $w={29}><NavArrow back /></Btn><Btn $w={29}><NavArrow /></Btn><Btn $w={29}><Reload /></Btn><Btn $w={29}><Home /></Btn></NavButtons>
      <CreateNew>Create New<Caret $c="#555" $hh={4} /></CreateNew>
      <SearchBox><Svg w={13} h={13} c="#555" sw={2}><circle cx="5" cy="5" r="3.600" /><path d="M8 8l4 4" strokeWidth="2.500" strokeDasharray="2 .8" /></Svg><Caret $gap={1} $hh={4} /></SearchBox>
    </NavBar>
    <Header>
      <HeadText>
        <Crumb><a>P00325</a> » 7600 Series Router</Crumb>
        <Title>7600 Series Router</Title>
        <Desc><b>Program</b>{" · Develop new product for the September launch cycle.  This has\nindustry leading switching rates and lower power consumption."}</Desc>
        <Actions>
          <Btn $w={79} $left={6} $gap={6}><Svg w={12} h={12} c="#444" sw={2}><path d="M1 1h10v10H1z" /><path d="M4.500 10.500V4.500H10.500" strokeWidth="1" /></Svg>Summary</Btn>
          <Btn $w={89} $left={6} $gap={6}><Svg w={12} h={12} c="#333" sw={1.700}><path d="M.9.900h10.200v10.200H.900zM2.500 3.500h4.500v4.500h3" /></Svg>Gantt Chart</Btn>
          <Btn $w={79} $left={6} $gap={6}><Svg w={12} h={12} c="#444" sw={1.600}><path d="M6.500 1C3 1 1.300 2.800 1.300 4.800 1.300 7 3 8.300 5 8.400L3.500 11.500l4-3.300c2-.400 3.600-1.500 3.600-3.400C11.200 2.500 9.500 1 6.500 1z" /></Svg>Comment</Btn>
          <Btn $w={55} $left={6} $gap={6}><Svg w={12} h={12} c="#333" sw={1.800}><path d="M.9 5.500h10.200v5.600H.900zM2.500 5.500V3q0-2 3.500-2t3.500 2v2.500M4 8.500h4" /></Svg>Lock</Btn>
          <Btn $w={62} $left={6} $gap={6}>Actions<Caret /></Btn>
        </Actions>
      </HeadText>
      <div><Title $mt={20}>In Process</Title><Progress><i /></Progress></div>
    </Header>
    <TabRow>
      <Tab $w={99} $pl={4}><Tw $w={21}><Tri dir="left" c="#aaa" s={8} /></Tw>General Info<Dot $c="#444" $gap={3} /></Tab>
      <Tab $w={75} $pl={14} $light>Schedule</Tab>
      <Tab $w={104} $pl={14} $on>Dependencies<Dot $c="#c01818" $gap={5} /></Tab>
      <Tab $w={58} $pl={15}>Team</Tab>
      <Tab $w={69} $pl={14}>Content<Dot $c="#444" $gap={6} /></Tab>
      <Tab $w={75} $pl={14}>Workflow</Tab>
      <Tab $w={57} $pl={14}>Team</Tab>
      <Tab $w={60} $pl={14}>C</Tab>
    </TabRow>
    <Notice>{"Lorem ipsum dolor sit amet, consectetuer adipiscing elit, sed diam nonummy nibh euismod tincidunt ut\nlaoreet dolore magna aliquam erat volutpat. Ut wisi enim ad minim veniam, quis nostrud exerci tation ullamcorpe\nsuscipit lobortis nisl ut aliquip ex ea commodo consequat. Up to three lines of instructional text are possible."}</Notice>
    <Reminder><i>*</i>Reminder: Correct object-based dependencies (or similar generic message)<a>Details</a><Popout /></Reminder>
    <TableHead><b>TableName XYZ</b><span>View:</span><ViewSelect>All Content</ViewSelect></TableHead>
    <TableBar><Btn $w={33}>Edit</Btn><Btn $w={36}>Add</Btn><Btn $w={55}>Remove</Btn><Btn $w={86} $gap={10}>Multi-Level<Caret $c="#555" $hh={4} /></Btn><Btn $w={46}>Go-To</Btn></TableBar>
    <Grid>
      <GridRows>
        {[["Col 2", "Col 3", "Col 4", "Col 5"], ...Array(4).fill(["Text", "Text", "Text", "Text"])].map((r, i) => (
          <GridRow key={i} $head={i === 0} $sel={i === 2} $bg={i === 0 ? "#f1f1f1" : i === 2 ? "#e6ecfd" : "#fff"}><span /><span /><span />{r.map((t, j) => <span key={j}>{t}</span>)}</GridRow>
        ))}
      </GridRows>
      <GridScroll $t={25} />
    </Grid>
  </Main>
);

const Document = () => (
  <Doc>
    <DocTabs>
      <DocTab $w={217} $pl={9} $pr={8} $ls={0.04}>oracle.psd @ 100% (agi_cs, RGB/8) *<Cross /></DocTab>
      <DocTab $w={313} $pl={9} $pr={7} $ls={0.02} $on>blueone_visual_direction.psd @ 100% (label, RGB/8#) *<Cross /></DocTab>
    </DocTabs>
    <Rulers><RulerCorner /><HStrip>{hTicks.map((t, i) => <HCell key={i}>{t}</HCell>)}</HStrip></Rulers>
    <CanvasRow>
      <VRuler>{vTicks.map((t, i) => <VCell key={i}>{t.split("").map((d, j) => <span key={j}>{d}</span>)}</VCell>)}</VRuler>
      <Canvas>
        <Win>
          <WinTitle><Gem $d="#7d1616" $c="#c8242a" $l="#ffb0a0" /><Gem $d="#96520c" $c="#e8881c" $l="#fff0a0" /><Gem $d="#2b6411" $c="#48a828" $l="#dcffb0" /><WinName>Welcome Terry Adams</WinName></WinTitle>
          <WinBody><SidePane /><Splitter /><MainPane /></WinBody>
        </Win>
      </Canvas>
      <Gutter />
    </CanvasRow>
  </Doc>
);

const LayersPanel = () => (
  <Layers>
    <PanelTabs><PanelTab $w={48} $on>LAYERS</PanelTab><PanelTab $w={64}>CHANNELS</PanelTab><PanelTab $w={45}>PATHS</PanelTab>
      <PanelMenu><Svg w={13} h={7} c="#333" sw={1}><path d="M5 .500h8M5 2.500h8M5 4.500h8M5 6.500h8" /><path d="M0 1.500h4L2 4z" fill="#333" stroke="none" /></Svg></PanelMenu></PanelTabs>
    <Line $h={25} $p="3px 0 0 4px"><Select $w={125}>Normal<Stepper /></Select><Item $gap={3} $w={38} $ls={-0.1}>Opacity:</Item><Field $w={32} $h={17} $top={1}>100%</Field><BlueTall><BlueDrop $w={12}><Caret $s={2.5} $c="#111" /></BlueDrop></BlueTall></Line>
    <Line $h={26} $p="4px 0 0 8px"><Item $w={27} $top={1}>Lock:</Item>
      <LockGroup><span><Svg w={10} h={10} c="#888" sw={1}><rect x=".5" y=".5" width="9" height="9" fill="#eee" /><path d="M1 1h2v2H1zM5 1h2v2H5zM3 3h2v2H3zM7 3h2v2H7zM1 5h2v2H1zM5 5h2v2H5zM3 7h2v2H3zM7 7h2v2H7z" fill="#ccc" stroke="none" /></Svg></span><span><Svg w={12} h={11} c="#888"><path d="M5 6l6-6M1 10q3 0 5-3L4.500 5Q1 7 1 10z" fill="#aaa" /></Svg></span><span><Svg w={12} h={12} c="#111"><path d="M6 1v10M1 6h10" /><path d="M6 0l2.200 2.800H3.800zM6 12l2.200-2.800H3.800zM0 6l2.800-2.200v4.400zM12 6L9.200 3.800v4.400z" fill="#111" stroke="none" /></Svg></span><span><Svg w={10} h={11} c="#111"><path d="M2.500 5V3.500q0-2.500 2.500-2.500t2.500 2.500V5" /><rect x="1" y="5" width="8" height="5" fill="#333" /></Svg></span></LockGroup>
      <Item $gap={49} $w={17} $top={0}>Fill:</Item><Field $w={32} $h={17} $top={1}>100%</Field><BlueTall><BlueDrop $w={12}><Caret $s={2.5} $c="#111" /></BlueDrop></BlueTall></Line>
    <LayerArea>
      <LayerList>
        {layers.map(([name, depth, kind, line, h, hidden], i) => (
          <LayerRow key={i} $h={h} $line={line * 16}>
            <EyeCell $tall={h > 23} $rule={line === 0}><EyeBox $tall={h > 23}>{!hidden && <Eye />}</EyeBox></EyeCell>
            <LayerBody $l={line * 16 - (line ? 1 : 0)}>
              <Indent $w={depth * 16 - line * 16 + (line ? 1 : 0) + (kind === "t" ? 3 : 6) - (kind === "o" ? 2 : 0)} />
              {kind === "t" ? <Thumbnail /> : <><Disclosure><Tri dir={kind === "o" ? "down" : "right"} s={10} /></Disclosure><Indent $w={kind === "o" ? 1 : -1} /><FolderSlot><GFolder /></FolderSlot><Indent $w={1} /></>}
              <LayerName>{name}</LayerName>
            </LayerBody>
          </LayerRow>
        ))}
      </LayerList>
      <LayerScroll />
    </LayerArea>
  </Layers>
);

const Labels = ({ items }) => <InfoLabels>{items.map((t, i) => <span key={i}>{t || "\u00a0"}</span>)}</InfoLabels>;

const RightPanels = () => (
  <SideDock>
    <PanelTabs><PanelTab $w={36} $on>INFO</PanelTab><PanelTab $w={69}>NAVIGATOR</PanelTab></PanelTabs>
    <Info>
      <InfoRow $h={69} $b>
        <InfoCell><InfoIcon $pt={16}><Dropper /></InfoIcon><Labels items={["R :", "G :", "B :", "", "8-bit"]} /></InfoCell>
        <InfoCell><InfoIcon $pt={16}><Dropper /></InfoIcon><Labels items={["R :", "G :", "B :", "Idx :", "8-bit"]} /></InfoCell>
      </InfoRow>
      <InfoRow $h={30}>
        <InfoCell><InfoIcon $pt={8}><Svg w={9} h={9} c="#111" sw={1.200}><path d="M4.500 0v9M0 4.500h9" /></Svg></InfoIcon><Labels items={["X :", "Y :"]} /></InfoCell>
        <InfoCell><InfoIcon $pt={8}><Svg w={9} h={9} c="#111" sw={1.200}><path d="M1.500 10V1.500H9" /><path d="M9 2v7H2" strokeDasharray="1 1" /></Svg></InfoIcon><Labels items={["W :", "H :"]} /></InfoCell>
      </InfoRow>
    </Info>
    <PanelGap />
    <PanelTabs><PanelTab $w={70} $on>HISTOGRAM</PanelTab></PanelTabs>
    <HistWrap><HistBox><Histogram /></HistBox></HistWrap>
    <PanelGap />
    <PanelTabs><PanelTab $w={46} $on>COLOR</PanelTab><PanelTab $w={64}>SWATCHES</PanelTab><PanelTab $w={47}>STYLES</PanelTab></PanelTabs>
    <ColorBody>
      <Row>
        <Swatches><i /><i /></Swatches>
        <Sliders>
          {[["R", "#0ccbcb", "#ffcbcb"], ["G", "#cb2ccb", "#cbffcb"], ["B", "#cbcb0c", "#cbcbff"]].map(([n, a, b]) => (
            <SliderRow key={n}><b>{n}</b><div><Track $a={a} $b={b} /><KnobRow><svg width="9" height="8" viewBox="0 0 9 8"><path d="M4.500.500L8.500 4.500V7.500H.500V4.500z" fill="#d5dde3" stroke="#555" strokeWidth=".9" /></svg></KnobRow></div><Field $w={30} $h={17}>203</Field></SliderRow>
          ))}
        </Sliders>
      </Row>
      <Spectrum />
    </ColorBody>
    <PanelGap />
    <PanelTabs><PanelTab $w={45} $on>MASKS</PanelTab><PanelTab $w={80}>ADJUSTMENTS</PanelTab></PanelTabs>
    <MaskHead><MaskT>T</MaskT><MaskNote>No mask selected</MaskNote><MaskBtn><Svg w={10} h={10} c="#555" sw={1}><circle cx="5" cy="5" r="4" fill="#eee" /></Svg></MaskBtn></MaskHead>
    <MaskLine>Density:<Field $w={32} $h={18} /></MaskLine>
    <MaskLine>Feather:<Field $w={32} $h={18} /></MaskLine>
    <MaskLine $bare>Refine:<Pill $w={90} $m="0 -38px 0 0">Mask Edge...</Pill></MaskLine>
  </SideDock>
);

export default function App() {
  return (
    <>
      <GlobalStyle />
      <Shell>
        <AppBarContent />
        <Options />
        <Workspace>
          <ToolColumn />
          <Document />
          <Docks>
            <DarkStrip $end $h={13} $pad="0 174px 0 0"><DblArrow /></DarkStrip>
            <DockRow><LayersPanel /><RightPanels /></DockRow>
          </Docks>
        </Workspace>
      </Shell>
    </>
  );
}
